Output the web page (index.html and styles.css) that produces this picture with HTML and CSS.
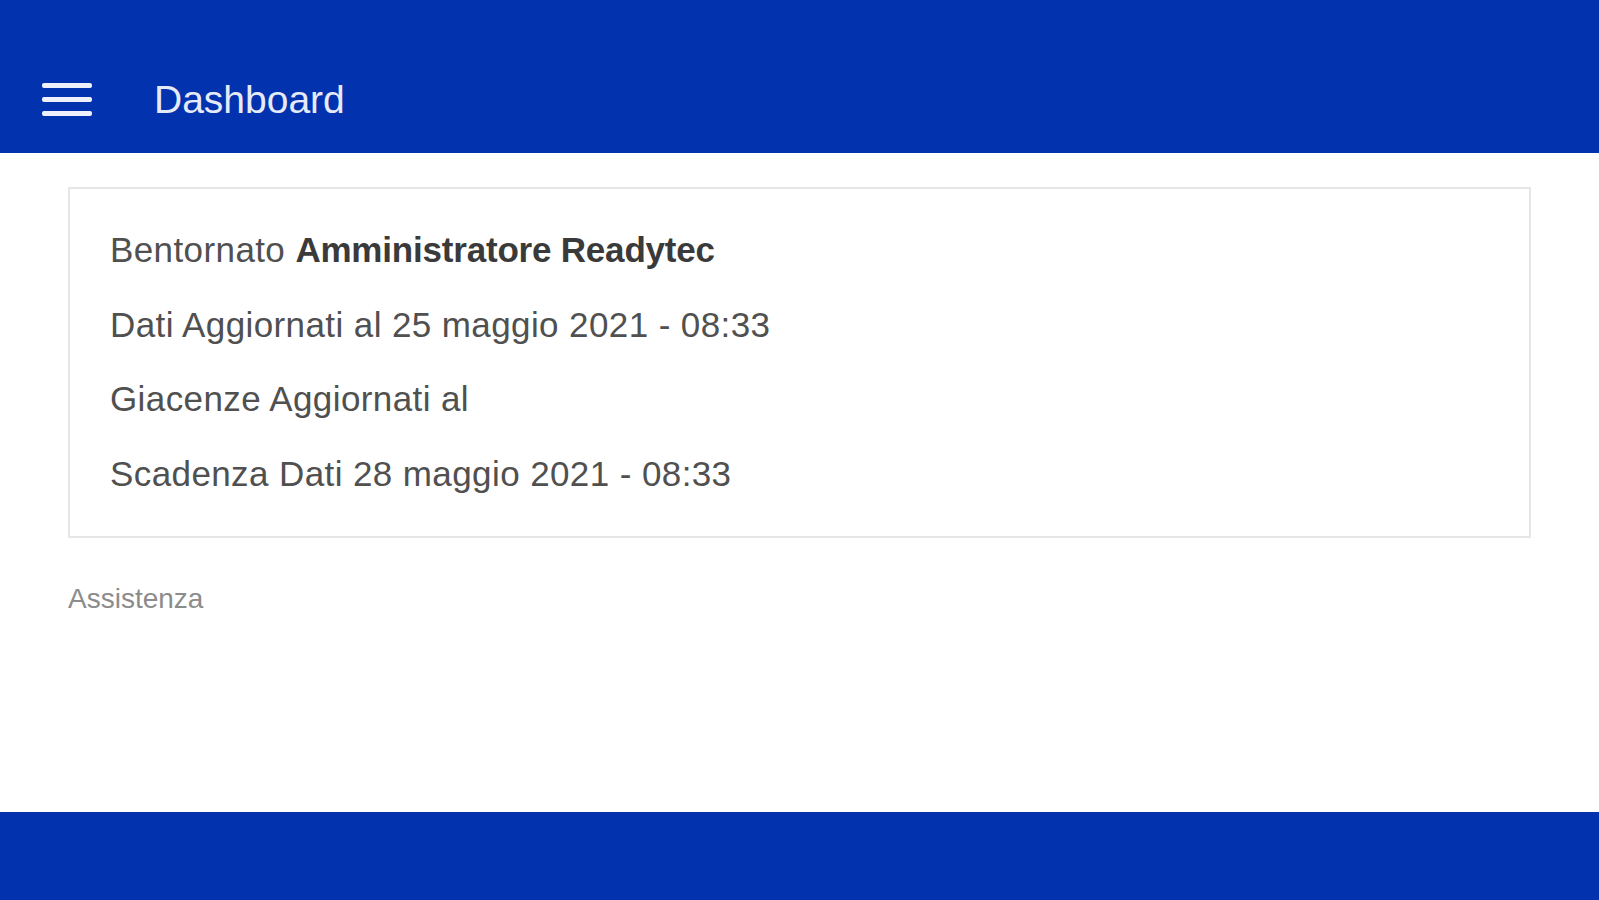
FILE: index.html
```html
<!DOCTYPE html>
<html>
<head><meta charset="utf-8"/>
<title>Dashboard</title>
<link rel="stylesheet" href="styles.css">
</head>
<body>
<div class="app">
<header class="topbar">
    <div class="topbar-row">
        <button class="menu-btn" aria-label="Menu">
            <svg width="50" height="34" viewBox="0 0 50 34">
                <rect x="0" y="0" width="50" height="5" rx="2" fill="#eef1fb"></rect>
                <rect x="0" y="14" width="50" height="5" rx="2" fill="#eef1fb"></rect>
                <rect x="0" y="28" width="50" height="5" rx="2" fill="#eef1fb"></rect>
            </svg>
        </button>
        <h1 class="page-title">Dashboard</h1>
    </div>
</header>

<main class="content">
    <div class="info-card">
        <p class="info-line">Bentornato <b>Amministratore Readytec</b></p>
        <p class="info-line">Dati Aggiornati al 25 maggio 2021 - 08:33</p>
        <p class="info-line">Giacenze Aggiornati al</p>
        <p class="info-line">Scadenza Dati 28 maggio 2021 - 08:33</p>
    </div>
    <a class="help-link" href="#">Assistenza</a>
</main>

<footer class="bottombar"></footer>
</div>
</body>
</html>
```

FILE: styles.css
```css
html, body { margin: 0px; border: 0px; padding: 0px; height: 100%; } /* go fullpage */

body {
    font-family: "Liberation Sans", Arial, sans-serif;
    background: #ffffff;
}

.app {
    display: flex;
    flex-direction: column;
    height: 100vh;
}

.topbar {
    background-color: #0232ad;
    height: 153px;
    box-sizing: border-box;
    padding: 55px 0 8px 42px;
}

.topbar-row {
    display: flex;
    align-items: center;
    height: 90px;
    gap: 62px;
}

.menu-btn {
    background: none;
    border: 0;
    padding: 0;
    display: flex;
    cursor: pointer;
}

.page-title {
    margin: 0;
    font-size: 39px;
    font-weight: normal;
    color: #e6eaf8;
}

.content {
    flex: 1;
    padding: 34px 68px 0 68px;
}

.info-card {
    border: 2px solid #e6e6e6;
    padding: 24px 40px 25px 40px;
}

.info-line {
    margin: 0;
    font-size: 35px;
    line-height: 74.5px;
    letter-spacing: 0.4px;
    color: #505050;
    white-space: nowrap;
}

.info-line b {
    color: #3a3a3a;
    letter-spacing: -0.2px;
}

.help-link {
    display: inline-block;
    margin-top: 45px;
    font-size: 28px;
    color: #8c8c8c;
    text-decoration: none;
}

.bottombar {
    background-color: #0232ad;
    height: 88px;
}
```
